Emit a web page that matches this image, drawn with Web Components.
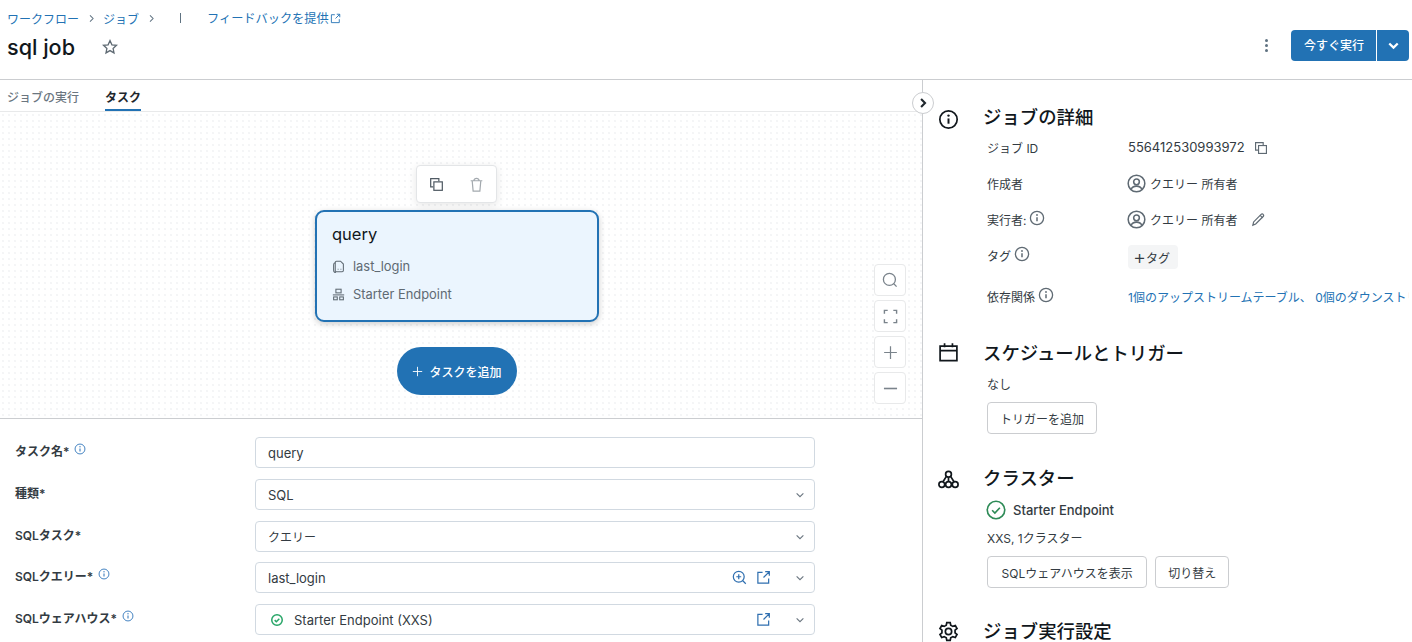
<!DOCTYPE html>
<html lang="ja">
<head>
<meta charset="utf-8">
<title>sql job</title>
<style>
  html, body { margin: 0; height: 642px; overflow: hidden; background: #fff; }
  body { font-family: Inter, "Noto Sans CJK JP", sans-serif; font-size: 12px; color: #1f272d; }
</style>
</head>
<body>
<job-page></job-page>

<script>
const svg = (size, body, extra = '') =>
  `<svg width="${size}" height="${size}" viewBox="0 0 16 16" fill="none" stroke="currentColor" stroke-width="1.3" style="display:block;flex:none;${extra}">${body}</svg>`;

const icons = {
  info: (s, c = '') => svg(s, '<circle cx="8" cy="8" r="6.6"/><path d="M8 7.2v4" stroke-width="1.5"/><circle cx="8" cy="5" r=".9" fill="currentColor" stroke="none"/>', c),
  copy: (s) => svg(s, '<path d="M10.5 4.5V1.8H1.8v8.7h2.7"/><rect x="5.2" y="5.2" width="9" height="9"/>'),
  trash: (s) => svg(s, '<path d="M1.8 4h12.4M5.2 4c0-3.4 5.6-3.4 5.6 0M3.4 4l1 11h7.2l1-11"/>'),
  star: (s) => svg(s, '<path d="M8 1.6l1.9 4.2 4.6.5-3.4 3.1.9 4.5L8 11.6l-4 2.3.9-4.5-3.4-3.1 4.6-.5z"/>'),
  ext: (s) => svg(s, '<path d="M7 2.5H2v11.5h11.5V9M8 8l6-6M9.8 1.8h4.4v4.4"/>'),
  chevron: (s, w = 1.5) => svg(s, `<path d="M3.5 5.8L8 10.3l4.5-4.5" stroke-width="${w}"/>`),
  zoomPlus: (s) => svg(s, '<circle cx="7.2" cy="7.2" r="5.8"/><path d="M11.5 11.5l3.2 3.2M7.2 4.6v5.2M4.6 7.2h5.2"/>'),
  search: (s) => svg(s, '<circle cx="7.4" cy="7.4" r="6"/><path d="M11.8 11.8l2.8 2.8"/>'),
  fit: (s) => svg(s, '<path d="M1.5 5V1.5H5M11 1.5h3.5V5M14.5 11v3.5H11M5 14.5H1.5V11" stroke-width="1.5"/>'),
  plus: (s) => svg(s, '<path d="M8 1.2v13.6M1.2 8h13.6"/>'),
  minus: (s) => svg(s, '<path d="M1 8h14" stroke-width="1.7"/>'),
  query: (s) => svg(s, '<path d="M5.5 1.5h5l3.5 3.5v8c0 .8-.7 1.5-1.5 1.5h-7C4.700 14.500 4 13.800 4 13V3c0-.8.7-1.500 1.500-1.500z"/><path d="M4 3.500c-1.200.2-2 1-2 2.200v6.800c0 1.600 1.200 2.800 2.800 2.800"/><path d="M7 11.500h1M10.500 11.500h1"/>'),
  warehouse: (s) => svg(s, '<rect x="4.800" y="1.500" width="6.400" height="4.500"/><path d="M1 8.500h14"/><rect x="2" y="11" width="4.500" height="3.500"/><rect x="9.500" y="11" width="4.500" height="3.500"/>'),
  user: (s) => svg(s, '<circle cx="8" cy="8" r="7"/><circle cx="8" cy="6.6" r="2.4"/><path d="M3.4 13c.8-2 2.6-2.8 4.6-2.8s3.8.8 4.6 2.8"/>'),
  pencil: (s) => svg(s, '<path d="M2 14l.8-3.4 8-8c.7-.7 1.6-.7 2.2 0 .7.6.7 1.5 0 2.2l-8 8z"/><path d="M9.8 3.6l2.6 2.6"/>'),
  calendar: (s) => svg(s, '<path d="M1.6 3.2h12.8v11H1.6zM1.600 6.600h12.800M5 1v3M11 1v3"/>'),
  cluster: (s) => svg(s, '<circle cx="8" cy="4" r="2.2"/><circle cx="8" cy="11.8" r="2.2"/><circle cx="2.9" cy="11.8" r="2.2"/><circle cx="13.1" cy="11.8" r="2.2"/><path d="M8 6.2v3.4M6.4 5.6L3.8 9.7M9.6 5.6l2.6 4.1"/>'),
  gear: (s) => svg(s, '<circle cx="8" cy="8" r="2.4"/><path d="M6.7 1.2h2.6l.4 2 1.6.9 1.9-.7 1.3 2.3-1.5 1.3v2l1.5 1.3-1.3 2.3-1.9-.7-1.6.9-.4 2H6.7l-.4-2-1.6-.9-1.9.7-1.3-2.3 1.5-1.3V7L1.5 5.7l1.3-2.3 1.9.7 1.6-.9z"/>'),
  check: (s, w = 1.3) => svg(s, `<circle cx="8" cy="8" r="7" stroke-width="${w}"/><path d="M4.9 8.2l2.2 2.2 4-4.2" stroke-width="${w}"/>`)
};

class JobHeader extends HTMLElement {
  connectedCallback() {
    this.attachShadow({ mode: 'open' });
    this.shadowRoot.innerHTML = `
      <style>
        :host { display: flex; justify-content: space-between; height: 79px; border-bottom: 1px solid #cbcdd0; box-sizing: content-box; }
        .left { padding: 10px 0 0 7px; }
        .crumbs { display: flex; align-items: center; height: 16px; color: #2272b4; font-size: 12px; }
        .sep { color: #5f7281; width: 24px; display: flex; justify-content: center; }
        .sep svg { transform: rotate(-90deg); }
        .bar { width: 1px; height: 10px; background: #5f7281; margin: 0 26px 0 17px; }
        .fb { font-size: 12.2px; }
        .title { display: flex; align-items: center; height: 32px; margin-top: 5px; font-size: 21.6px; font-weight: 500; color: #11171c; }
        .star { margin-left: 27px; color: #5f6a73; }
        .right { display: flex; align-items: center; padding: 30px 3px 0 0; height: 31px; }
        .more { width: 4px; margin-right: 22px; display: grid; gap: 2px; }
        .more i { width: 3px; height: 3px; border-radius: 50%; background: #5f7281; }
        .run { display: flex; height: 31px; color: #fff; background: #2272b4; border-radius: 4px; font-size: 12px; font-weight: 500; align-items: center; }
        .run b { font-weight: 500; padding: 0 12px 0 13px; line-height: 31px; border-right: 1px solid #fff; }
        .run span { width: 32px; display: flex; justify-content: center; }
      </style>
      <div class="left">
        <div class="crumbs">
          <span>ワークフロー</span><span class="sep">${icons.chevron(11)}</span>
          <span>ジョブ</span><span class="sep">${icons.chevron(11)}</span>
          <span class="bar"></span>
          <span class="fb">フィードバックを提供</span><span style="margin-left:1px">${icons.ext(11)}</span>
        </div>
        <div class="title">sql job<span class="star">${icons.star(16)}</span></div>
      </div>
      <div class="right">
        <div class="more"><i></i><i></i><i></i></div>
        <div class="run"><b>今すぐ実行</b><span>${icons.chevron(15, 2.4)}</span></div>
      </div>`;
  }
}

class JobTabs extends HTMLElement {
  connectedCallback() {
    this.attachShadow({ mode: 'open' });
    this.shadowRoot.innerHTML = `
      <style>
        :host { display: flex; gap: 26px; height: 31px; padding-left: 7px; border-bottom: 1px solid #e8e9ea; font-size: 12px; font-weight: 500; color: #6b7680; }
        span { padding-top: 8px; box-sizing: border-box; height: 31px; }
        .on { color: #1f272d; font-weight: 600; box-shadow: inset 0 -2px 0 #2272b4; }
      </style>
      <span>ジョブの実行</span><span class="on">タスク</span>`;
  }
}

class TaskNode extends HTMLElement {
  connectedCallback() {
    this.attachShadow({ mode: 'open' });
    this.shadowRoot.innerHTML = `
      <style>
        :host { display: block; position: absolute; left: 315px; top: 98px; width: 284px; height: 112px; box-sizing: border-box; padding: 11px 15px; background: #ebf5fe; border: 2px solid #2272b4; border-radius: 9px; box-shadow: 0 2px 6px rgba(0,0,0,.2); }
        .name { font-size: 16.5px; color: #11171c; line-height: 22px; margin-bottom: 7px; }
        .row { display: flex; align-items: center; gap: 8px; height: 28px; color: #5f6a73; font-size: 12.9px; }
      </style>
      <div class="name"><slot name="title"></slot></div>
      <div class="row">${icons.query(13)}<slot name="query"></slot></div>
      <div class="row">${icons.warehouse(13)}<slot name="warehouse"></slot></div>`;
  }
}

class DagCanvas extends HTMLElement {
  connectedCallback() {
    this.attachShadow({ mode: 'open' });
    this.shadowRoot.innerHTML = `
      <style>
        :host { display: block; position: relative; height: 306px; border-bottom: 1px solid #cbcdd0; overflow: hidden;
          background-image: radial-gradient(circle, #eff0f2 .6px, transparent .9px); background-size: 6px 6px; }
        .tools { position: absolute; left: 416px; top: 53px; width: 81px; height: 38px; box-sizing: border-box; background: #fff; border: 1px solid #e3e5e7; border-radius: 4px; box-shadow: 0 2px 8px rgba(0,0,0,.1); display: flex; align-items: center; padding-left: 12px; gap: 25px; }
        .add { position: absolute; left: 397px; top: 235px; width: 120px; height: 48px; background: #2272b4; color: #fff; border-radius: 24px; display: flex; align-items: center; justify-content: center; gap: 6px; font-size: 12px; font-weight: 500; }
        .zoom { position: absolute; left: 874px; top: 152px; display: grid; gap: 4px; }
        .zoom span { width: 32px; height: 32px; box-sizing: border-box; background: #fff; border: 1px solid #e8e9ea; border-radius: 4px; display: flex; align-items: center; justify-content: center; color: #7a838b; }
      </style>
      <div class="tools"><span style="color:#4f5a63">${icons.copy(15)}</span><span style="color:#a3a9ae">${icons.trash(15)}</span></div>
      <slot></slot>
      <div class="add">${icons.plus(11)}<span>タスクを追加</span></div>
      <div class="zoom">
        <span>${icons.search(16)}</span><span>${icons.fit(15)}</span><span>${icons.plus(15)}</span><span>${icons.minus(15)}</span>
      </div>`;
  }
}

class FormRow extends HTMLElement {
  connectedCallback() {
    this.attachShadow({ mode: 'open' });
    const hint = this.hasAttribute('hint') ? `<span class="hint">${icons.info(12)}</span>` : '';
    const ok = this.hasAttribute('ok') ? `<span style="color:#27a567;margin-right:11px">${icons.check(12, 2)}</span>` : '';
    const zoom = this.hasAttribute('zoom') ? `<span class="act" style="margin-right:9px">${icons.zoomPlus(15)}</span>` : '';
    const ext = this.hasAttribute('ext') ? `<span class="act" style="margin-right:23px">${icons.ext(15)}</span>` : '';
    const select = this.hasAttribute('select') ? `<span class="chev">${icons.chevron(12)}</span>` : '';
    this.shadowRoot.innerHTML = `
      <style>
        :host { display: grid; grid-template-columns: 240px 560px; height: 31px; padding-left: 15px; align-items: center; }
        .label { display: flex; align-items: center; gap: 5px; font-size: 12px; font-weight: 600; color: #333b42; margin-top: -4px; }
        .hint { color: #3f7fbf; margin-top: -3px; }
        .box { display: flex; align-items: center; height: 31px; box-sizing: border-box; padding: 0 8px 0 ${ok ? 15 : 12}px; border: 1px solid #d1d9e1; border-radius: 4px; font-size: 13px; color: #333b42; }
        .val { flex: 1; }
        .act { color: #2f6fb0; }
        .chev { color: #6b7680; }
      </style>
      <div class="label"><slot name="label"></slot>${hint}</div>
      <div class="box">${ok}<span class="val"><slot></slot></span>${zoom}${ext}${select}</div>`;
  }
}

class TaskForm extends HTMLElement {
  connectedCallback() {
    this.attachShadow({ mode: 'open' });
    this.shadowRoot.innerHTML = `
      <style>
        :host { display: grid; row-gap: 11px; padding-top: 18px; }
      </style>
      <slot></slot>`;
  }
}

class SideSection extends HTMLElement {
  connectedCallback() {
    this.attachShadow({ mode: 'open' });
    const name = this.getAttribute('icon');
    const drop = { info: 6, calendar: 0, cluster: 5, gear: 2 }[name];
    this.shadowRoot.innerHTML = `
      <style>
        :host { display: block; margin-top: var(--gap, 0); }
        h2 { display: flex; align-items: center; margin: 0; height: 26px; font-size: 18.4px; font-weight: 500; color: #11171c; }
        .ico { width: 45px; margin: ${drop}px 0 0 -1px; }
        .body { padding-left: 48px; }
      </style>
      <h2><span class="ico">${icons[name](21)}</span><span>${this.getAttribute('heading')}</span></h2>
      <div class="body"><slot></slot></div>`;
  }
}

class DetailRow extends HTMLElement {
  connectedCallback() {
    this.attachShadow({ mode: 'open' });
    const hint = this.hasAttribute('hint') ? `<span style="color:#5f6a73;margin-top:-2px">${icons.info(16)}</span>` : '';
    this.shadowRoot.innerHTML = `
      <style>
        :host { display: grid; grid-template-columns: 141px max-content; height: 36px; align-items: center; font-size: 12px; color: #333b42; white-space: nowrap; }
        .k { display: flex; align-items: center; gap: 3px; }
        .v { display: flex; align-items: center; gap: 4px; }
      </style>
      <div class="k"><slot name="k"></slot>${hint}</div>
      <div class="v"><slot></slot></div>`;
  }
}

class OutlineButton extends HTMLElement {
  connectedCallback() {
    this.attachShadow({ mode: 'open' });
    this.shadowRoot.innerHTML = `
      <style>
        :host { display: inline-flex; align-items: center; height: 32px; box-sizing: border-box; padding: 0 12px; border: 1px solid #cbcdd0; border-radius: 4px; font-size: 12px; color: #333b42; white-space: nowrap; }
      </style>
      <slot></slot>`;
  }
}

class JobSide extends HTMLElement {
  connectedCallback() {
    this.attachShadow({ mode: 'open' });
    this.shadowRoot.innerHTML = `
      <style>
        :host { display: block; position: relative; height: 562px; padding: 23px 0 0 16px; box-sizing: border-box; overflow: hidden; border-left: 1px solid #cbcdd0; }
      </style>
      <slot></slot>`;
  }
}

class JobPage extends HTMLElement {
  connectedCallback() {
    this.attachShadow({ mode: 'open' });
    this.shadowRoot.innerHTML = `
      <style>
        :host { display: block; height: 642px; overflow: hidden; }
        .cols { display: grid; grid-template-columns: 922px 490px; }
        .toggle { position: absolute; left: 912px; top: 92px; width: 22px; height: 22px; box-sizing: border-box; background: #fff; border: 1px solid #cbcdd0; border-radius: 50%; display: flex; align-items: center; justify-content: center; color: #1f272d; z-index: 2; }
        .toggle svg { transform: rotate(-90deg); }
      </style>
      <job-header></job-header>
      <div class="toggle">${icons.chevron(14, 2.4)}</div>
      <div class="cols">
        <div>
          <job-tabs></job-tabs>
          <dag-canvas>
            <task-node>
              <span slot="title">query</span>
              <span slot="query">last_login</span>
              <span slot="warehouse">Starter Endpoint</span>
            </task-node>
          </dag-canvas>
          <task-form>
            <form-row hint><span slot="label">タスク名*</span>query</form-row>
            <form-row select><span slot="label">種類*</span>SQL</form-row>
            <form-row select><span slot="label">SQLタスク*</span><span style="font-size:12px">クエリー</span></form-row>
            <form-row hint zoom ext select style="margin-top:-1px"><span slot="label">SQLクエリー*</span>last_login</form-row>
            <form-row hint ok ext select><span slot="label">SQLウェアハウス*</span>Starter Endpoint (XXS)</form-row>
          </task-form>
        </div>
        <job-side>
          <side-section icon="info" heading="ジョブの詳細">
            <detail-row><span slot="k">ジョブ ID</span><span style="font-size:13px">556412530993972</span><span style="margin-left:5px;margin-top:2px;color:#5f6a73">${icons.copy(14)}</span></detail-row>
            <detail-row><span slot="k">作成者</span><span style="color:#5f6a73;margin-left:-1px">${icons.user(19)}</span>クエリー 所有者</detail-row>
            <detail-row hint><span slot="k">実行者:</span><span style="color:#5f6a73;margin-left:-1px">${icons.user(19)}</span>クエリー 所有者<span style="margin-left:10px;color:#5f6a73">${icons.pencil(15)}</span></detail-row>
            <detail-row hint><span slot="k">タグ</span><span style="display:inline-flex;align-items:center;height:24px;padding:0 8px 0 5px;background:#f4f5f6;border-radius:4px;margin-top:4px"><span style="font-size:20px;line-height:20px;font-weight:300">+</span>タグ</span></detail-row>
            <detail-row hint style="margin-top:5px"><span slot="k">依存関係</span><span style="display:block;width:281px;overflow:hidden;color:#2272b4">1個のアップストリームテーブル、 0個のダウンストリームテーブル</span></detail-row>
          </side-section>

          <side-section icon="calendar" heading="スケジュールとトリガー" style="--gap:25px">
            <div style="font-size:12px;color:#333b42;margin-top:11px;line-height:18px">なし</div>
            <outline-button style="margin:8px 0 0">トリガーを追加</outline-button>
          </side-section>

          <side-section icon="cluster" heading="クラスター" style="--gap:30px">
            <div style="display:flex;align-items:center;gap:7px;font-size:13px;font-weight:500;color:#333b42;margin-top:9px;height:22px"><span style="color:#2e8b57;margin-left:-1px">${icons.check(20)}</span>Starter Endpoint</div>
            <div style="font-size:12px;color:#333b42;margin-top:9px;line-height:18px">XXS, 1クラスター</div>
            <div style="display:flex;gap:8px;margin-top:8px"><outline-button style="padding:0 13.5px">SQLウェアハウスを表示</outline-button><outline-button>切り替え</outline-button></div>
          </side-section>

          <side-section icon="gear" heading="ジョブ実行設定" style="--gap:29px"></side-section>
        </job-side>
      </div>`;
  }
}

customElements.define('job-header', JobHeader);
customElements.define('job-tabs', JobTabs);
customElements.define('task-node', TaskNode);
customElements.define('dag-canvas', DagCanvas);
customElements.define('form-row', FormRow);
customElements.define('task-form', TaskForm);
customElements.define('side-section', SideSection);
customElements.define('detail-row', DetailRow);
customElements.define('outline-button', OutlineButton);
customElements.define('job-side', JobSide);
customElements.define('job-page', JobPage);
</script>
</body>
</html>
